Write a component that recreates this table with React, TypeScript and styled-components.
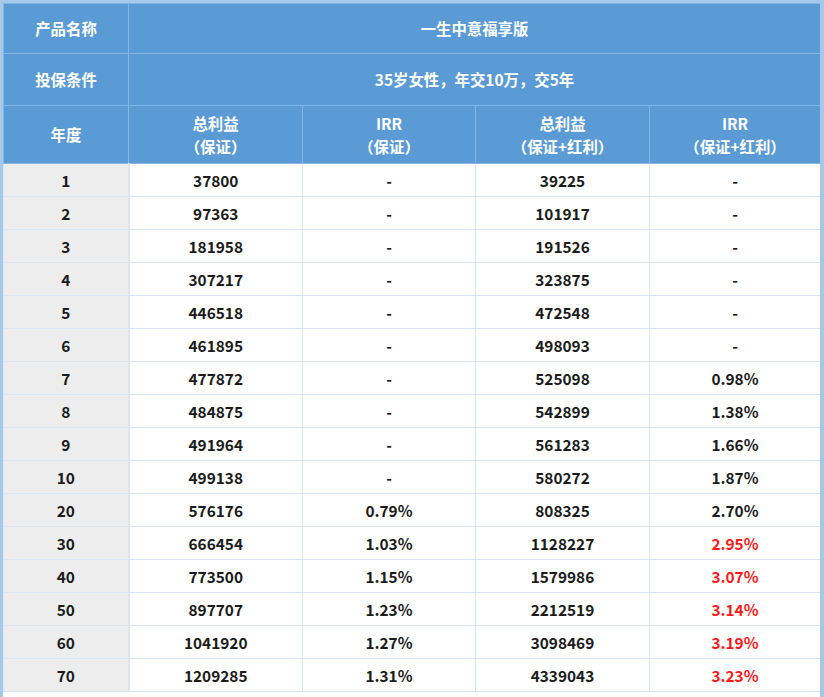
import React from "react";
import styled, { createGlobalStyle } from "styled-components";

const Global = createGlobalStyle`
  html, body { margin: 0; padding: 0; background: #ffffff; }
  body { font-family: "Noto Sans CJK SC", "Noto Sans", sans-serif; }
`;

const Frame = styled.div`
  width: 824px;
  height: 697px;
  box-sizing: border-box;
  border-left: 3px solid #a6c9eb;
  border-right: 4px solid #a6c9eb;
  border-top: 3px solid #a6c9eb;
  background: #ffffff;
  overflow: hidden;
`;

const Table = styled.table`
  width: 817px;
  border-collapse: collapse;
  table-layout: fixed;
`;

const HeadCell = styled.th<{ $h: number }>`
  background: #5b9bd5;
  color: #ffffff;
  font-size: 15.4px;
  font-weight: 700;
  line-height: 23px;
  height: ${(p) => p.$h}px;
  padding: 0;
  text-align: center;
  border: 1px solid #86b6e3;
  box-sizing: border-box;
`;

const Cell = styled.td<{ $first?: boolean; $red?: boolean }>`
  height: 33px;
  padding: 0 0 1px 0;
  box-sizing: border-box;
  text-align: center;
  font-size: 15.4px;
  font-weight: 700;
  color: ${(p) => (p.$red ? "#ff1a1a" : "#1b1b1b")};
  background: ${(p) => (p.$first ? "#ededed" : "#ffffff")};
  border: 1px solid #d9e7f5;
  border-right-width: ${(p) => (p.$first ? "2px" : "1px")};
`;

type Row = [string, string, string, string, string, boolean?];

const rows: Row[] = [
  ["1", "37800", "-", "39225", "-"],
  ["2", "97363", "-", "101917", "-"],
  ["3", "181958", "-", "191526", "-"],
  ["4", "307217", "-", "323875", "-"],
  ["5", "446518", "-", "472548", "-"],
  ["6", "461895", "-", "498093", "-"],
  ["7", "477872", "-", "525098", "0.98%"],
  ["8", "484875", "-", "542899", "1.38%"],
  ["9", "491964", "-", "561283", "1.66%"],
  ["10", "499138", "-", "580272", "1.87%"],
  ["20", "576176", "0.79%", "808325", "2.70%"],
  ["30", "666454", "1.03%", "1128227", "2.95%", true],
  ["40", "773500", "1.15%", "1579986", "3.07%", true],
  ["50", "897707", "1.23%", "2212519", "3.14%", true],
  ["60", "1041920", "1.27%", "3098469", "3.19%", true],
  ["70", "1209285", "1.31%", "4339043", "3.23%", true],
];

export default function App() {
  return (
    <>
      <Global />
      <Frame>
        <Table>
          <colgroup>
            <col style={{ width: 125 }} />
            <col style={{ width: 174 }} />
            <col style={{ width: 173 }} />
            <col style={{ width: 174 }} />
            <col style={{ width: 171 }} />
          </colgroup>
          <thead>
            <tr>
              <HeadCell $h={50}>产品名称</HeadCell>
              <HeadCell $h={50} colSpan={4}>一生中意福享版</HeadCell>
            </tr>
            <tr>
              <HeadCell $h={52}>投保条件</HeadCell>
              <HeadCell $h={52} colSpan={4}>35岁女性，年交10万，交5年</HeadCell>
            </tr>
            <tr>
              <HeadCell $h={58}>年度</HeadCell>
              <HeadCell $h={58}>总利益<br />（保证）</HeadCell>
              <HeadCell $h={58}>IRR<br />（保证）</HeadCell>
              <HeadCell $h={58}>总利益<br />（保证+红利）</HeadCell>
              <HeadCell $h={58}>IRR<br />（保证+红利）</HeadCell>
            </tr>
          </thead>
          <tbody>
            {rows.map((r) => (
              <tr key={r[0]}>
                <Cell $first>{r[0]}</Cell>
                <Cell>{r[1]}</Cell>
                <Cell>{r[2]}</Cell>
                <Cell>{r[3]}</Cell>
                <Cell $red={r[5]}>{r[4]}</Cell>
              </tr>
            ))}
          </tbody>
        </Table>
      </Frame>
    </>
  );
}
